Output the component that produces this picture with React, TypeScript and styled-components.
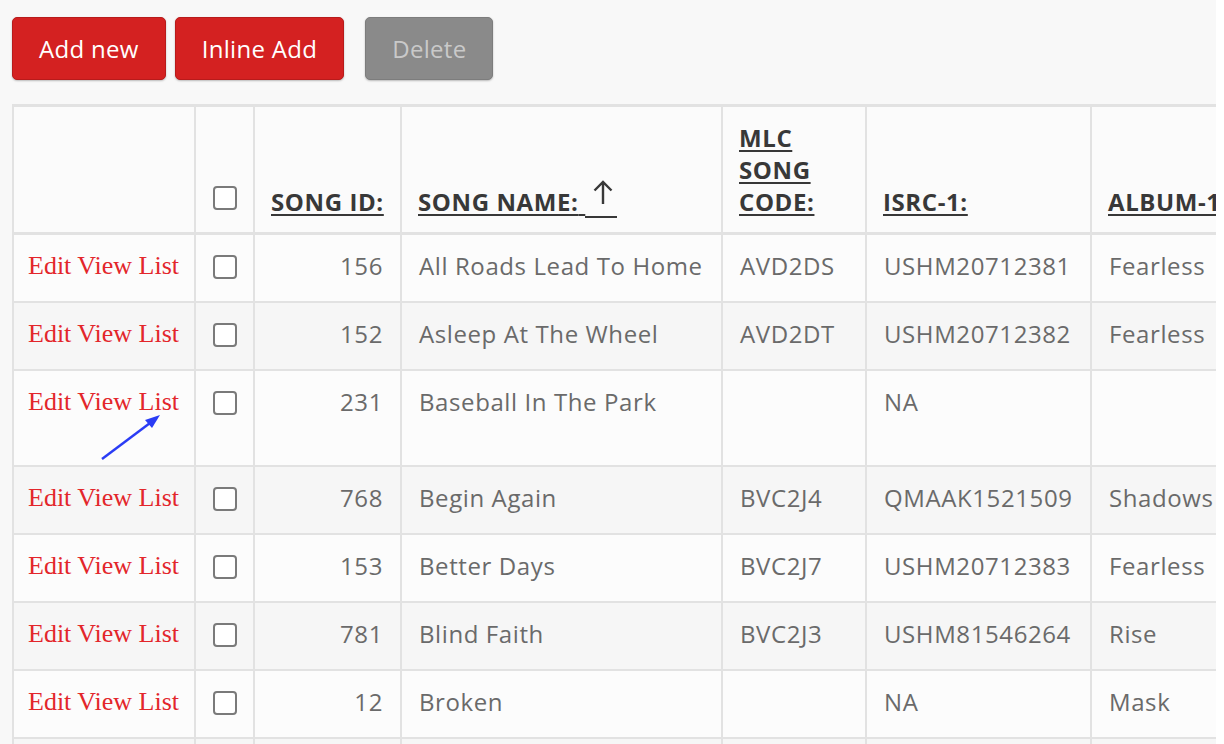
import { styled, createGlobalStyle } from "styled-components";

const GlobalStyle = createGlobalStyle`
  body {
    margin: 0;
    background: #ffffff;
    font-family: "Open Sans", "Liberation Sans", sans-serif;
  }
`;

type Song = {
  id: number;
  name: string;
  code: string;
  isrc: string;
  album: string;
  tall?: boolean;
};

const songs: Song[] = [
  { id: 156, name: "All Roads Lead To Home", code: "AVD2DS", isrc: "USHM20712381", album: "Fearless" },
  { id: 152, name: "Asleep At The Wheel", code: "AVD2DT", isrc: "USHM20712382", album: "Fearless" },
  { id: 231, name: "Baseball In The Park", code: "", isrc: "NA", album: "", tall: true },
  { id: 768, name: "Begin Again", code: "BVC2J4", isrc: "QMAAK1521509", album: "Shadows" },
  { id: 153, name: "Better Days", code: "BVC2J7", isrc: "USHM20712383", album: "Fearless" },
  { id: 781, name: "Blind Faith", code: "BVC2J3", isrc: "USHM81546264", album: "Rise" },
  { id: 12, name: "Broken", code: "", isrc: "NA", album: "Mask" },
  { id: 90, name: "Brother", code: "BVC2J9", isrc: "USHM20712390", album: "Fearless" },
];

const Page = styled.div`
  width: 1216px;
  height: 744px;
  background: #f8f8f8;
  padding: 17px 0 0 12px;
  box-sizing: border-box;
  overflow: hidden;
`;

const Toolbar = styled.div`
  display: flex;
  align-items: center;
  gap: 9px;
  margin-bottom: 24px;
`;

const Button = styled.button<{ $disabled?: boolean; $gapLeft?: number }>`
  height: 63px;
  padding: 0 26px;
  margin-left: ${(p) => p.$gapLeft ?? 0}px;
  border-radius: 5px;
  border: 1px solid ${(p) => (p.$disabled ? "#7d7d7d" : "#b81b1b")};
  background: ${(p) => (p.$disabled ? "#8a8a8a" : "#d42121")};
  color: ${(p) => (p.$disabled ? "#c9c9c9" : "#ffffff")};
  font-family: "Open Sans", sans-serif;
  font-size: 24px;
  letter-spacing: 0.3px;
  box-shadow: 0 1px 2px rgba(0, 0, 0, 0.25);
  cursor: ${(p) => (p.$disabled ? "default" : "pointer")};
`;

const Table = styled.table`
  border-collapse: collapse;
  table-layout: fixed;
  width: 1404px;
  background: #fdfdfd;
  border-top: 3px solid #e2e2e2;
  border-left: 2px solid #e2e2e2;
`;

const HeadCell = styled.th<{ $nowrap?: boolean }>`
  vertical-align: bottom;
  text-align: left;
  padding: 15px 12px 14px 16px;
  background: #fbfbfb;
  border-right: 2px solid #e2e2e2;
  border-bottom: 3px solid #e2e2e2;
  font-size: 24px;
  line-height: 32px;
  font-weight: 700;
  letter-spacing: 0.6px;
  color: #383838;
  white-space: ${(p) => (p.$nowrap ? "nowrap" : "normal")};
`;

const SortLink = styled.a`
  color: inherit;
  text-decoration: underline;
  text-underline-offset: 3px;
  text-decoration-thickness: 2px;
`;

// sort indicator; carries its own underline since an svg is not decorated
const SortArrow = styled.span`
  display: inline-block;
  padding: 0 4px 12px 8px;
  margin-bottom: -7px;
  border-bottom: 2px solid #383838;
  line-height: 0;

  svg {
    display: block;
    width: 20px;
    height: 24px;
  }
`;

const Row = styled.tr<{ $odd: boolean; $tall?: boolean }>`
  height: ${(p) => (p.$tall ? "96px" : "auto")};
  background: ${(p) => (p.$odd ? "#f6f6f6" : "#fcfcfc")};
`;

const Cell = styled.td<{ $align?: string }>`
  position: relative;
  vertical-align: top;
  text-align: ${(p) => p.$align ?? "left"};
  padding: 15px 17px 19px 17px;
  border-right: 2px solid #e2e2e2;
  border-bottom: 2px solid #e2e2e2;
  font-size: 24px;
  line-height: 32px;
  letter-spacing: 0.6px;
  color: #6a6a6a;
  white-space: nowrap;
  overflow: hidden;
`;

const LinkCell = styled(Cell)`
  padding-left: 14px;
  overflow: visible;
`;

const CheckCell = styled(Cell)`
  padding: 20px 0 20px 0;
  line-height: 0;
`;

const CheckHead = styled(HeadCell)`
  padding: 0 0 22px 0;
  line-height: 0;
`;

const Box = styled.span`
  display: block;
  margin: 0 auto;
  width: 20px;
  height: 20px;
  border: 2px solid #7a7a7a;
  border-radius: 4px;
  background: #ffffff;
`;

const Links = styled.span`
  display: inline-block;
  vertical-align: top;
  line-height: 32px;
  font-family: "Liberation Serif", "Times New Roman", serif;
  font-size: 26px;
  letter-spacing: 0;
  color: #e3262b;
`;

const Callout = styled.svg`
  position: absolute;
  left: 86px;
  top: 42px;
  width: 62px;
  height: 48px;
  overflow: visible;
`;

export default function App() {
  return (
    <>
      <GlobalStyle />
      <Page>
        <Toolbar>
          <Button>Add new</Button>
          <Button>Inline Add</Button>
          <Button $disabled $gapLeft={12}>
            Delete
          </Button>
        </Toolbar>
        <Table>
          <colgroup>
            <col style={{ width: 182 }} />
            <col style={{ width: 59 }} />
            <col style={{ width: 147 }} />
            <col style={{ width: 321 }} />
            <col style={{ width: 144 }} />
            <col style={{ width: 225 }} />
            <col style={{ width: 175 }} />
            <col style={{ width: 150 }} />
          </colgroup>
          <thead>
            <tr>
              <HeadCell />
              <CheckHead>
                <Box />
              </CheckHead>
              <HeadCell $nowrap>
                <SortLink>SONG ID:</SortLink>
              </HeadCell>
              <HeadCell $nowrap>
                <SortLink>
                  SONG NAME:{" "}
                  <SortArrow>
                    <svg viewBox="0 0 20 24">
                      <path
                        d="M10 24 V2 M1.5 10.5 L10 2 L18.5 10.5"
                        fill="none"
                        stroke="#383838"
                        strokeWidth="2.4"
                      />
                    </svg>
                  </SortArrow>
                </SortLink>
              </HeadCell>
              <HeadCell>
                <SortLink>MLC SONG CODE:</SortLink>
              </HeadCell>
              <HeadCell $nowrap>
                <SortLink>ISRC-1:</SortLink>
              </HeadCell>
              <HeadCell $nowrap>
                <SortLink>ALBUM-1:</SortLink>
              </HeadCell>
              <HeadCell $nowrap>
                <SortLink>ALBUM-2:</SortLink>
              </HeadCell>
            </tr>
          </thead>
          <tbody>
            {songs.map((s, i) => (
              <Row key={s.id} $odd={i % 2 === 1} $tall={s.tall}>
                <LinkCell>
                  <Links>Edit View List</Links>
                  {s.tall && (
                    <Callout viewBox="0 0 62 48">
                      <line x1="2" y1="46" x2="54" y2="7" stroke="#2a3cf5" strokeWidth="2.4" />
                      <polygon points="60,2 45,7 52,15" fill="#2a3cf5" />
                    </Callout>
                  )}
                </LinkCell>
                <CheckCell>
                  <Box />
                </CheckCell>
                <Cell $align="right">{s.id}</Cell>
                <Cell>{s.name}</Cell>
                <Cell>{s.code}</Cell>
                <Cell>{s.isrc}</Cell>
                <Cell>{s.album}</Cell>
                <Cell />
              </Row>
            ))}
          </tbody>
        </Table>
      </Page>
    </>
  );
}
